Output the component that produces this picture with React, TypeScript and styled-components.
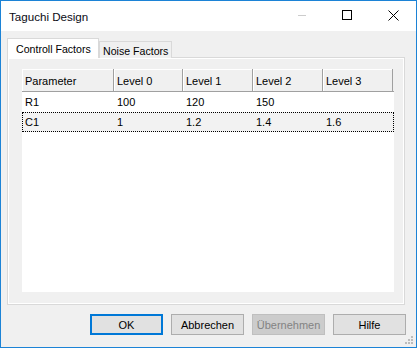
import React from 'react';
import styled, {createGlobalStyle} from 'styled-components';

const GlobalStyle = createGlobalStyle`
    html, body {
        margin: 0;
        padding: 0;
        background: #ffffff;
    }
    body {
        font-family: "Liberation Sans", Arial, sans-serif;
        font-size: 11px;
        color: #000000;
    }
`

const Window = styled.div`
    position: relative;
    width: 417px;
    height: 348px;
    box-sizing: border-box;
    border: 1px solid #1c83d6;
    display: flex;
    flex-direction: column;
    background: #f0f0f0;
`
const TitleBar = styled.div`
    height: 30px;
    background: #ffffff;
    display: flex;
    align-items: center;
`
const Title = styled.div`
    flex: 1;
    padding-left: 8px;
    font-size: 11.6px;
    color: #0a0a14;
`
const CaptionButton = styled.div`
    width: 46px;
    height: 30px;
    display: flex;
    align-items: center;
    justify-content: center;
    padding-bottom: 2px;
    box-sizing: border-box;
`
const Body = styled.div`
    flex: 1;
    display: flex;
    flex-direction: column;
    padding: 8px 10px 0 6px;
`
const TabStrip = styled.div`
    display: flex;
    align-items: flex-end;
    height: 19px;
    margin-bottom: -1px;
    position: relative;
    z-index: 1;
`
const Tab = styled.div<{ $active?: boolean }>`
    box-sizing: border-box;
    height: ${({$active}) => $active ? '20px' : '17px'};
    width: ${({$active}) => $active ? '92px' : '73px'};
    padding-left: ${({$active}) => $active ? '8px' : '3px'};
    padding-top: ${({$active}) => $active ? '0' : '1px'};
    background: ${({$active}) => $active ? '#ffffff' : '#f0f0f0'};
    border: 1px solid #d9d9d9;
    border-bottom: none;
    display: flex;
    align-items: center;
    white-space: nowrap;
    font-size: 10.6px;
`
const TabPage = styled.div`
    height: 248px;
    margin-right: 1px;
    box-sizing: border-box;
    border: 1px solid #d9d9d9;
    box-shadow: inset 1px 1px 0 #ffffff, inset -1px -1px 0 #ffffff;
    padding: 11px 10px 12px 14px;
    display: flex;
`
const List = styled.div`
    flex: 1;
    background: #ffffff;
`
const columns = '92px 69px 70px 70px 70px';

const HeaderRow = styled.div`
    display: grid;
    grid-template-columns: ${columns};
    height: 23px;
    box-sizing: border-box;
    border-bottom: 1px solid #a0a0a0;
    background: #f0f0f0;
`
const HeaderCell = styled.div`
    display: flex;
    align-items: center;
    padding-left: 3px;
    border-right: 1px solid #a0a0a0;
    box-shadow: inset 1px 1px 0 #ffffff;
    padding-top: 1px;
`
const Row = styled.div<{ $focused?: boolean }>`
    display: grid;
    grid-template-columns: ${columns};
    height: 20px;
    background: ${({$focused}) => $focused ? '#f2f2f2' : '#ffffff'};
    outline: ${({$focused}) => $focused ? '1px dotted #000000' : 'none'};
    outline-offset: -1px;
`
const Cell = styled.div`
    display: flex;
    align-items: center;
    padding-left: 3px;
`
const ButtonRow = styled.div`
    display: flex;
    justify-content: flex-end;
    gap: 8px;
    margin-top: 9px;
`
const Button = styled.div<{ $default?: boolean; $disabled?: boolean }>`
    width: 73px;
    height: 21px;
    box-sizing: border-box;
    display: flex;
    align-items: center;
    justify-content: center;
    background: ${({$disabled}) => $disabled ? '#cccccc' : '#e1e1e1'};
    color: ${({$disabled}) => $disabled ? '#838383' : '#000000'};
    border: ${({$default, $disabled}) =>
        $default ? '2px solid #0078d7' : $disabled ? '1px solid #bfbfbf' : '1px solid #adadad'};
`
const Grip = styled.svg`
    position: absolute;
    right: 2px;
    bottom: 2px;
`

const rows = [
    ['R1', '100', '120', '150', ''],
    ['C1', '1', '1.2', '1.4', '1.6'],
];

function App() {
    return (
        <>
            <GlobalStyle/>
            <Window>
                <TitleBar>
                    <Title>Taguchi Design</Title>
                    <CaptionButton>
                        <svg width="10" height="10" shapeRendering="crispEdges">
                            <line x1="2" y1="5.5" x2="12" y2="5.5" stroke="#cccccc"/>
                        </svg>
                    </CaptionButton>
                    <CaptionButton>
                        <svg width="10" height="10" shapeRendering="crispEdges">
                            <rect x="0.5" y="0.5" width="9" height="9" fill="none" stroke="#000"/>
                        </svg>
                    </CaptionButton>
                    <CaptionButton>
                        <svg width="11" height="11">
                            <path d="M0.5 0.5 L10.5 10.5 M10.5 0.5 L0.5 10.5" stroke="#000" strokeWidth="1"/>
                        </svg>
                    </CaptionButton>
                </TitleBar>
                <Body>
                    <TabStrip>
                        <Tab $active>Controll Factors</Tab>
                        <Tab>Noise Factors</Tab>
                    </TabStrip>
                    <TabPage>
                        <List>
                            <HeaderRow>
                                <HeaderCell>Parameter</HeaderCell>
                                <HeaderCell>Level 0</HeaderCell>
                                <HeaderCell>Level 1</HeaderCell>
                                <HeaderCell>Level 2</HeaderCell>
                                <HeaderCell>Level 3</HeaderCell>
                            </HeaderRow>
                            {rows.map((r, i) =>
                                <Row key={r[0]} $focused={i === 1}>
                                    {r.map((c, j) => <Cell key={j}>{c}</Cell>)}
                                </Row>
                            )}
                        </List>
                    </TabPage>
                    <ButtonRow>
                        <Button $default>OK</Button>
                        <Button>Abbrechen</Button>
                        <Button $disabled>Übernehmen</Button>
                        <Button>Hilfe</Button>
                    </ButtonRow>
                </Body>
                <Grip width="10" height="10" shapeRendering="crispEdges">
                    <rect x="7" y="1" width="2" height="2" fill="#bcbcbc"/>
                    <rect x="4" y="4" width="2" height="2" fill="#bcbcbc"/>
                    <rect x="7" y="4" width="2" height="2" fill="#bcbcbc"/>
                    <rect x="1" y="7" width="2" height="2" fill="#bcbcbc"/>
                    <rect x="4" y="7" width="2" height="2" fill="#bcbcbc"/>
                    <rect x="7" y="7" width="2" height="2" fill="#bcbcbc"/>
                </Grip>
            </Window>
        </>
    )
}

export default App;
